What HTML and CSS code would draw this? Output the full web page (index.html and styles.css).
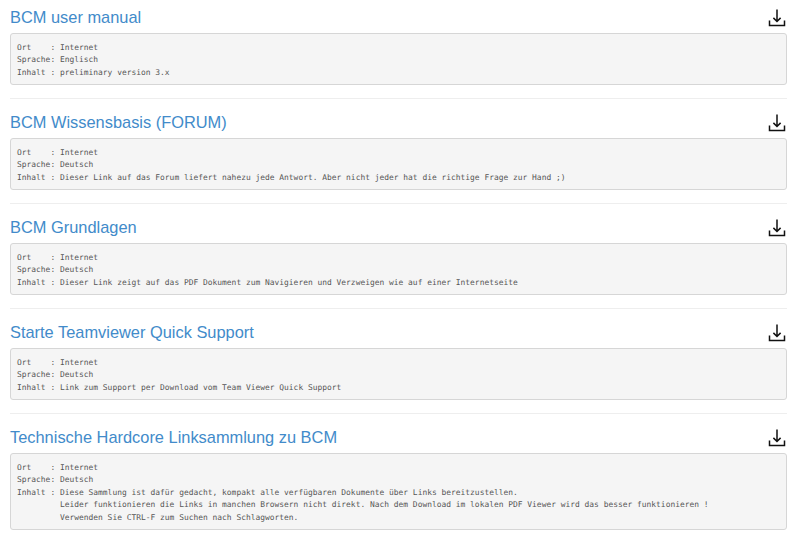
FILE: index.html
```html
<!DOCTYPE html>
<html>
  <head>
    <meta charset="utf-8" />
    <title>BCM Links</title>
    <link rel="stylesheet" href="styles.css">
  </head>
  <body>
    <section class="entry">
      <div class="entry-head">
        <h2><a href="#">BCM user manual</a></h2>
        <a class="download" href="#"><svg viewBox="0 0 18 18"><path d="M9 .5v12M5.4 8.9L9 12.5l3.6-3.6M1.5 11.5v5h15v-5"/></svg></a>
      </div>
<pre>Ort    : Internet
Sprache: Englisch
Inhalt : preliminary version 3.x</pre>
    </section>
    <hr />
    <section class="entry">
      <div class="entry-head">
        <h2><a href="#">BCM Wissensbasis (FORUM)</a></h2>
        <a class="download" href="#"><svg viewBox="0 0 18 18"><path d="M9 .5v12M5.4 8.9L9 12.5l3.6-3.6M1.5 11.5v5h15v-5"/></svg></a>
      </div>
<pre>Ort    : Internet
Sprache: Deutsch
Inhalt : Dieser Link auf das Forum liefert nahezu jede Antwort. Aber nicht jeder hat die richtige Frage zur Hand ;)</pre>
    </section>
    <hr />
    <section class="entry">
      <div class="entry-head">
        <h2><a href="#">BCM Grundlagen</a></h2>
        <a class="download" href="#"><svg viewBox="0 0 18 18"><path d="M9 .5v12M5.4 8.9L9 12.5l3.6-3.6M1.5 11.5v5h15v-5"/></svg></a>
      </div>
<pre>Ort    : Internet
Sprache: Deutsch
Inhalt : Dieser Link zeigt auf das PDF Dokument zum Navigieren und Verzweigen wie auf einer Internetseite</pre>
    </section>
    <hr />
    <section class="entry">
      <div class="entry-head">
        <h2><a href="#">Starte Teamviewer Quick Support</a></h2>
        <a class="download" href="#"><svg viewBox="0 0 18 18"><path d="M9 .5v12M5.4 8.9L9 12.5l3.6-3.6M1.5 11.5v5h15v-5"/></svg></a>
      </div>
<pre>Ort    : Internet
Sprache: Deutsch
Inhalt : Link zum Support per Download vom Team Viewer Quick Support</pre>
    </section>
    <hr />
    <section class="entry">
      <div class="entry-head">
        <h2><a href="#">Technische Hardcore Linksammlung zu BCM</a></h2>
        <a class="download" href="#"><svg viewBox="0 0 18 18"><path d="M9 .5v12M5.4 8.9L9 12.5l3.6-3.6M1.5 11.5v5h15v-5"/></svg></a>
      </div>
<pre class="tall">Ort    : Internet
Sprache: Deutsch
Inhalt : Diese Sammlung ist dafür gedacht, kompakt alle verfügbaren Dokumente über Links bereitzustellen.
         Leider funktionieren die Links in manchen Browsern nicht direkt. Nach dem Download im lokalen PDF Viewer wird das besser funktionieren !
         Verwenden Sie CTRL-F zum Suchen nach Schlagworten.</pre>
    </section>
  </body>
</html>
```

FILE: styles.css
```css
body {
  margin: 0;
  padding: 6px 13px 0 10px;
  background-color: #fff;
  font-family: "Liberation Sans", Arial, sans-serif;
  overflow: hidden;
}

.entry-head {
  display: flex;
  justify-content: space-between;
  align-items: flex-start;
  height: 27px;
}

h2 {
  margin: 0;
  font-size: 16.4px;
  font-weight: 400;
  line-height: 22px;
}

h2 a {
  color: #428bca;
  text-decoration: none;
}

.download {
  display: block;
  width: 18px;
  height: 18px;
  margin: 3px 1px 0 0;
}

.download svg {
  display: block;
  width: 18px;
  height: 18px;
  fill: none;
  stroke: #111;
  stroke-width: 1.5;
}

pre {
  margin: 0;
  padding: 7.5px 6px 0;
  height: 52px;
  box-sizing: border-box;
  font-family: "DejaVu Sans Mono", "Liberation Mono", monospace;
  font-size: 7.93px;
  line-height: 12.5px;
  color: #555;
  background-color: #f5f5f5;
  border: 1px solid #d6d6d6;
  border-radius: 3px;
  white-space: pre;
  overflow: hidden;
}

pre.tall {
  height: 77px;
}

hr {
  margin: 13px 0 12px;
  border: 0;
  border-top: 1px solid #eee;
}
```
